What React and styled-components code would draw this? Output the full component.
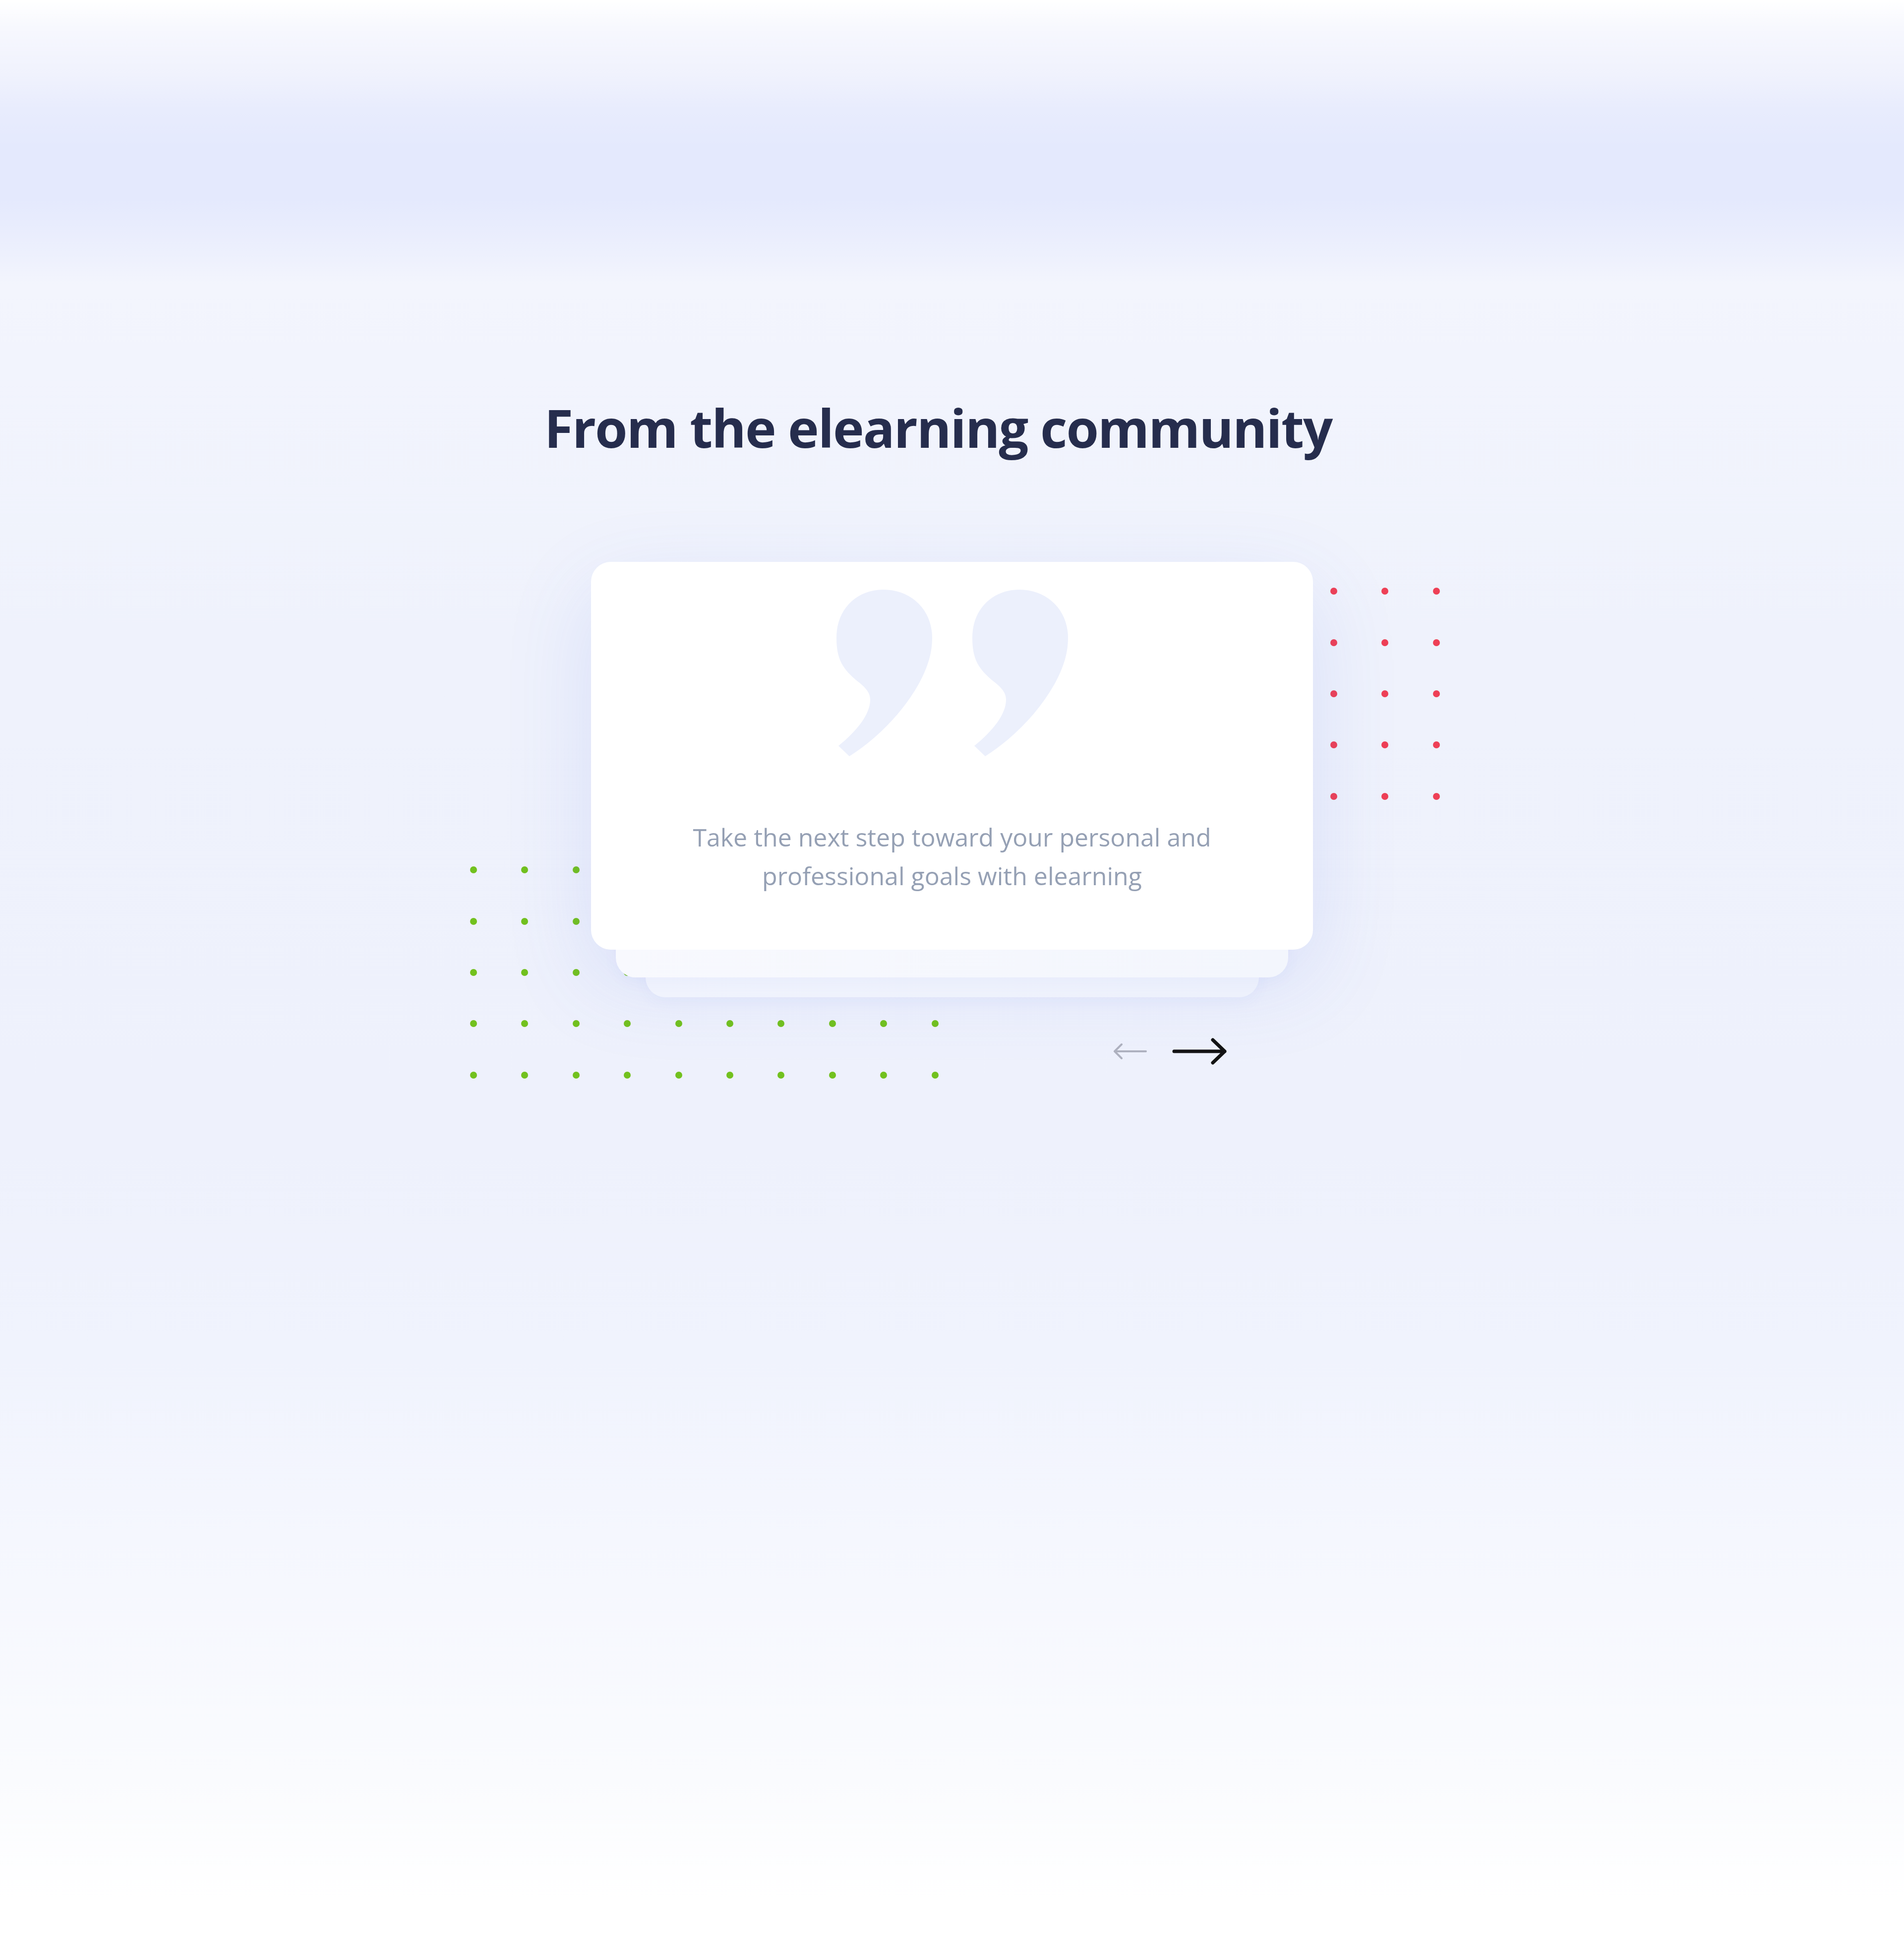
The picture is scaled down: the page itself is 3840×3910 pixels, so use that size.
import React from "react";
import styled, { createGlobalStyle } from "styled-components";

const Global = createGlobalStyle`
  html, body { margin: 0; padding: 0; }
  body { font-family: "Open Sans", "Noto Sans", Arial, sans-serif; }
`;

const Page = styled.div`
  min-height: 3910px;
  box-sizing: border-box;
  padding-top: 799px;
  background: linear-gradient(
    180deg,
    #ffffff 0px,
    #f7f8fe 55px,
    #f0f2fd 150px,
    #e8ecfd 220px,
    #e4e9fd 300px,
    #e4e9fd 400px,
    #e8ecfd 450px,
    #edf0fd 510px,
    #f3f5fd 575px,
    #f2f4fd 720px,
    #eff2fc 1300px,
    #eef1fc 2300px,
    #f0f3fd 2734px,
    #f5f7fe 3100px,
    #fafbfe 3590px,
    #ffffff 3836px
  );
  display: flex;
  flex-direction: column;
  align-items: center;
`;

const Heading = styled.h2`
  margin: 0;
  padding-right: 56px;
  font-family: "Open Sans", "Noto Sans", Arial, sans-serif;
  font-weight: 700;
  font-size: 106px;
  line-height: 1.2;
  color: #262d4d;
  letter-spacing: -2px;
`;

const Stage = styled.div`
  position: relative;
  width: 1456px;
  margin-top: 207px;
  display: flex;
  flex-direction: column;
`;

const DotGrid = styled.div`
  position: absolute;
  left: ${(p) => p.$left}px;
  top: ${(p) => p.$top}px;
  display: grid;
  grid-template-columns: repeat(${(p) => p.$cols}, 14px);
  gap: 89.4px;
  z-index: 0;
`;

const Dot = styled.span`
  width: 14px;
  height: 14px;
  border-radius: 50%;
  background: ${(p) => p.$color};
`;

const CardStack = styled.div`
  position: relative;
  z-index: 1;
  display: grid;
  border-radius: 40px;
  box-shadow: 0 60px 180px rgba(70, 100, 225, 0.13);
`;

const BackLayer = styled.div`
  grid-area: 1 / 1;
  align-self: end;
  height: 200px;
  margin: 0 ${(p) => p.$right}px ${(p) => -p.$drop}px ${(p) => p.$left}px;
  border-radius: 40px;
  background: ${(p) => p.$bg};
  box-shadow: 0 10px 30px rgba(70, 100, 225, 0.04);
`;

const Card = styled.div`
  grid-area: 1 / 1;
  position: relative;
  z-index: 2;
  background: #ffffff;
  border-radius: 40px;
  padding: 56px 0 110px;
  display: flex;
  flex-direction: column;
  align-items: center;
`;

const QuoteMarks = styled.div`
  display: flex;
  gap: 81px;
`;

const Quote = styled.p`
  margin: 124px 0 0;
  max-width: 1140px;
  text-align: center;
  font-family: "Open Sans", "Noto Sans", Arial, sans-serif;
  font-weight: 400;
  font-size: 50px;
  line-height: 78px;
  color: #95a0b4;
`;

const Arrows = styled.div`
  margin-top: 176px;
  padding-right: 172px;
  display: flex;
  justify-content: flex-end;
  align-items: center;
  gap: 49px;
`;

const ArrowButton = styled.button`
  border: 0;
  padding: 0;
  background: none;
  display: flex;
  cursor: pointer;
  color: ${(p) => (p.$active ? "#141414" : "#afb2bf")};
`;

const QuoteGlyph = () => (
  <svg width="193" height="336" viewBox="0 0 193 336" aria-hidden="true">
    <path
      fill="#ecf0fc"
      d="M95 0 C40 0 0 40 0 97 C0 140 12 160 44 186 C62 200 68 210 68 222 C68 252 40 286 4 315 L26 336 C82 300 132 250 166 190 C185 155 193 127 193 97 C193 40 150 0 95 0 Z"
    />
  </svg>
);

const LeftArrow = () => (
  <svg width="70" height="36" viewBox="0 0 70 36" fill="none">
    <path
      d="M66 18 H4 M17 4 L3 18 L17 32"
      stroke="currentColor"
      strokeWidth="4"
      strokeLinecap="round"
      strokeLinejoin="round"
    />
  </svg>
);

const RightArrow = () => (
  <svg width="112" height="58" viewBox="0 0 112 58" fill="none">
    <path
      d="M4 29 H106 M82 6 L106 29 L82 52"
      stroke="currentColor"
      strokeWidth="7"
      strokeLinecap="round"
      strokeLinejoin="round"
    />
  </svg>
);

const dots = (n, color) =>
  Array.from({ length: n }, (_, i) => <Dot key={i} $color={color} />);

export default function App() {
  return (
    <>
      <Global />
      <Page>
        <Heading>From the elearning community</Heading>
        <Stage>
          <DotGrid $left={-244} $top={614} $cols={10}>
            {dots(50, "#72c11e")}
          </DotGrid>
          <DotGrid $left={1491} $top={52} $cols={3}>
            {dots(15, "#ee4056")}
          </DotGrid>
          <CardStack>
            <BackLayer
              $left={110}
              $right={109}
              $drop={96}
              $bg="linear-gradient(90deg, #f0f3fd, #edf1fc)"
            />
            <BackLayer
              $left={50}
              $right={50}
              $drop={56}
              $bg="linear-gradient(100deg, #f8f9fe, #f3f6fd)"
            />
            <Card>
              <QuoteMarks>
                <QuoteGlyph />
                <QuoteGlyph />
              </QuoteMarks>
              <Quote>
                Take the next step toward your personal and professional goals
                with elearning
              </Quote>
            </Card>
          </CardStack>
          <Arrows>
            <ArrowButton aria-label="Previous">
              <LeftArrow />
            </ArrowButton>
            <ArrowButton $active aria-label="Next">
              <RightArrow />
            </ArrowButton>
          </Arrows>
        </Stage>
      </Page>
    </>
  );
}
